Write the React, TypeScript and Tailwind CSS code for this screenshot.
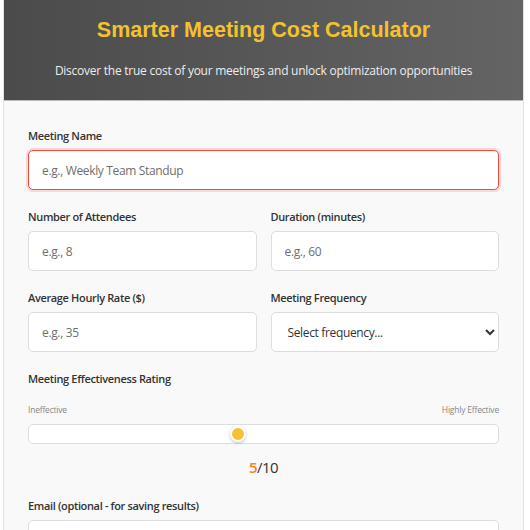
import { useState } from "react";

const labelCls =
  "block text-[11px] font-semibold tracking-[-0.35px] text-[#333] mb-[7px] leading-[15px]";
const inputCls =
  "w-full h-[40px] px-[13px] rounded-[5px] border border-[#ddd] bg-white text-[12px] tracking-[-0.35px] text-[#333] placeholder:text-[#6e6e6e] outline-none";

export default function App() {
  const [rating, setRating] = useState(5);

  return (
    <div className="min-h-[530px] bg-white" style={{ fontFamily: '"Open Sans", "Noto Sans", sans-serif' }}>
      <div className="ml-[3px] w-[521px] bg-[#f9f9f9] border-x border-[#e2e2e2]">
        {/* Header */}
        <div className="h-[101px] bg-gradient-to-r from-[#4b4b4b] to-[#646464] border-b border-[#bbb] flex flex-col items-center">
          <h1
            className="mt-[17px] text-[21.5px] font-bold text-[#f2c230] leading-[26px]"
            style={{ fontFamily: '"Liberation Sans", Arial, sans-serif' }}
          >
            Smarter Meeting Cost Calculator
          </h1>
          <p className="mt-[19px] text-[12px] tracking-[-0.25px] text-[#ededed] leading-[18px]">
            Discover the true cost of your meetings and unlock optimization opportunities
          </p>
        </div>

        {/* Form */}
        <div className="px-[24px] pt-[27px]">
          <div className="mb-[19px]">
            <label className={labelCls}>Meeting Name</label>
            <input
              autoFocus
              className={inputCls + " border-[#ef4b3f] shadow-[0_0_0_2px_rgba(239,75,63,0.18)] caret-[#333]"}
              placeholder="e.g., Weekly Team Standup"
            />
          </div>

          <div className="grid grid-cols-2 gap-x-[14px]">
            <div className="mb-[19px]">
              <label className={labelCls}>Number of Attendees</label>
              <input className={inputCls} placeholder="e.g., 8" />
            </div>
            <div className="mb-[19px]">
              <label className={labelCls}>Duration (minutes)</label>
              <input className={inputCls} placeholder="e.g., 60" />
            </div>
            <div className="mb-[19px]">
              <label className={labelCls}>Average Hourly Rate ($)</label>
              <input className={inputCls} placeholder="e.g., 35" />
            </div>
            <div className="mb-[19px]">
              <label className={labelCls}>Meeting Frequency</label>
              <select className={inputCls + " h-[39px] text-[#333] pl-[12px]"} defaultValue="">
                <option value="">Select frequency...</option>
                <option value="once">One-time</option>
                <option value="daily">Daily</option>
                <option value="weekly">Weekly</option>
                <option value="monthly">Monthly</option>
              </select>
            </div>
          </div>

          <div className="mb-[20px]">
            <label className={labelCls}>Meeting Effectiveness Rating</label>
            <div className="flex justify-between text-[8.5px] tracking-[-0.2px] text-[#888] mt-[18px] mb-[8px] leading-[12px]">
              <span>Ineffective</span>
              <span>Highly Effective</span>
            </div>
            <input
              type="range"
              min={1}
              max={10}
              value={rating}
              onChange={(e) => setRating(Number(e.target.value))}
              className="block w-full h-[20px] appearance-none bg-white border border-[#ddd] rounded-[5px] px-[1px] outline-none [&::-webkit-slider-thumb]:appearance-none [&::-webkit-slider-thumb]:w-[16px] [&::-webkit-slider-thumb]:h-[16px] [&::-webkit-slider-thumb]:rounded-full [&::-webkit-slider-thumb]:bg-[#f2c230] [&::-webkit-slider-thumb]:border-2 [&::-webkit-slider-thumb]:border-white [&::-webkit-slider-thumb]:shadow-[0_1px_3px_rgba(0,0,0,0.25)]"
            />
            <div className="text-center mt-[12px] text-[15px] tracking-[-0.5px] leading-[22px] text-[#333]">
              <span className="text-[#f5841f] font-semibold">{rating}</span>/10
            </div>
          </div>

          <div className="pb-[20px]">
            <label className={labelCls}>Email (optional - for saving results)</label>
            <input className={inputCls} placeholder="your@email.com" />
          </div>
        </div>
      </div>
    </div>
  );
}
